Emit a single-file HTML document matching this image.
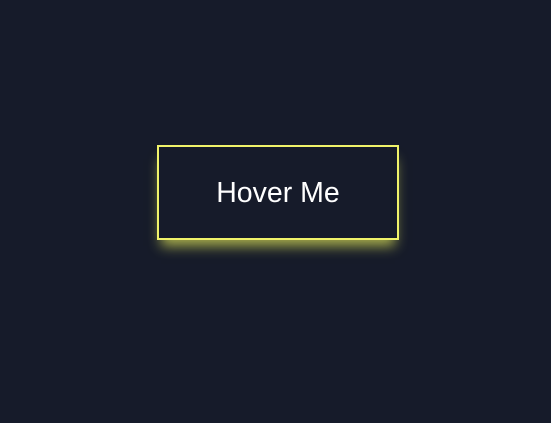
<!DOCTYPE html>
<html><head><style>
html,body{margin:0;padding:0;width:551px;height:423px;background:#161b2a;overflow:hidden}
.b{position:absolute;left:157px;top:145px;width:238px;height:91px;border:2px solid #f0f36a;background:#161b2a;color:#fff;font-family:"Liberation Sans",sans-serif;font-size:28.5px;display:flex;align-items:center;justify-content:center;box-shadow:0 10px 12px -4px rgba(230,235,90,0.7)}
</style></head><body>
<div class="b"><span style="margin-top:1px">Hover Me</span></div>
</body></html>
